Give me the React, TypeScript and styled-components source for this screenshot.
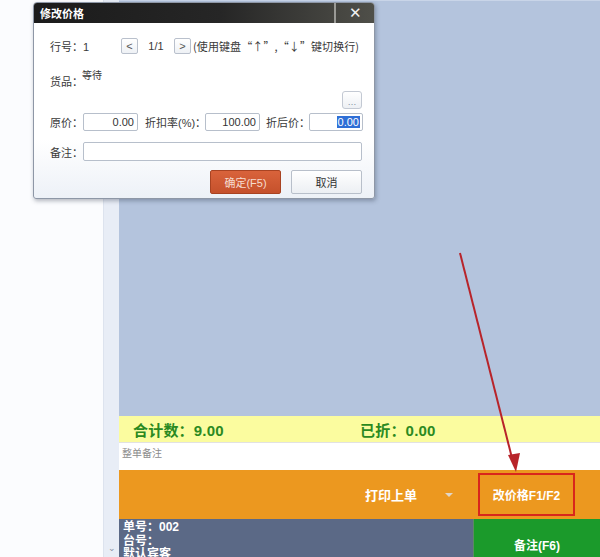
import React from "react";
import styled, { createGlobalStyle } from "styled-components";

const Global = createGlobalStyle`
  html, body { margin: 0; padding: 0; background: #ffffff; }
  body { font-family: "Liberation Sans", "Noto Sans CJK SC", sans-serif; }
  * { box-sizing: border-box; }
`;

const FONT = `"Liberation Sans", "Noto Sans CJK SC", sans-serif`;

const Page = styled.div`
  position: relative;
  width: 600px;
  height: 557px;
  overflow: hidden;
  display: grid;
  grid-template-columns: 103px 16px 1fr;
  font-family: ${FONT};
`;

const LeftPane = styled.div`
  background: #fbfcfe;
`;

const ScrollStrip = styled.div`
  background: #e8edf6;
  border-left: 1px solid #dde3ee;
  display: flex;
  flex-direction: column;
  justify-content: flex-end;
  align-items: center;
  padding-bottom: 4px;
  color: #8a93a3;
  font-size: 9px;
`;

const Main = styled.div`
  display: flex;
  flex-direction: column;
  min-width: 0;
`;

const BlueArea = styled.div`
  flex: 1;
  background: #b4c4dd;
  border-top: 1px solid #c9d5e8;
`;

const SummaryBar = styled.div`
  height: 26px;
  background: #fbfc9f;
  display: flex;
  align-items: center;
  padding-left: 14px;
`;

const SummaryItem = styled.span<{ $w?: number }>`
  width: ${(p) => (p.$w ? `${p.$w}px` : "auto")};
  color: #2b8a1f;
  font-weight: bold;
  font-size: 15px;
  letter-spacing: 0.2px;
`;

const NoteRow = styled.div`
  height: 28px;
  background: #ffffff;
  border-top: 1px solid #e2e2e2;
  padding: 2px 3px;
  font-size: 10px;
  color: #8c8c8c;
`;

const ActionBar = styled.div`
  height: 49px;
  background: #ec981f;
  display: flex;
  align-items: center;
`;

const ActionLabel = styled.span`
  margin-left: 246px;
  color: #ffffff;
  font-weight: bold;
  font-size: 13px;
`;

const Caret = styled.span`
  margin-left: 28px;
  width: 0;
  height: 0;
  border-left: 4px solid transparent;
  border-right: 4px solid transparent;
  border-top: 4px solid #e0d6c8;
`;

const HighlightBox = styled.div`
  margin-left: 25px;
  width: 97px;
  height: 43px;
  border: 2px solid #d9261c;
  display: flex;
  align-items: center;
  justify-content: center;
  color: #ffffff;
  font-weight: bold;
  font-size: 12px;
`;

const InfoBar = styled.div`
  height: 38px;
  display: grid;
  grid-template-columns: 354px 1fr;
  overflow: hidden;
`;

const OrderInfo = styled.div`
  background: #5b6986;
  color: #ffffff;
  font-weight: bold;
  font-size: 12px;
  line-height: 13.5px;
  padding: 2px 0 0 4px;
`;

const NoteButton = styled.div`
  background: #1b9a2b;
  border-left: 1px solid #5b8a62;
  color: #ffffff;
  font-weight: bold;
  font-size: 12px;
  display: flex;
  align-items: flex-end;
  justify-content: center;
  padding-bottom: 9px;
`;

/* Dialog */
const Dialog = styled.div`
  position: absolute;
  left: 33px;
  top: 2px;
  width: 342px;
  height: 197px;
  border: 1px solid #8e97a6;
  border-radius: 4px 4px 3px 3px;
  box-shadow: 1px 2px 4px rgba(40, 50, 70, 0.35);
  background: linear-gradient(180deg, #ffffff 0%, #ffffff 70%, #edf1f7 100%);
  overflow: hidden;
  font-size: 11px;
  color: #3a3a3a;
`;

const TitleBar = styled.div`
  height: 20px;
  background: linear-gradient(90deg, #1b1b1b 0%, #262626 55%, #4f4f49 100%);
  display: flex;
  align-items: center;
  color: #ffffff;
`;

const Title = styled.span`
  flex: 1;
  padding-left: 6px;
  font-weight: bold;
  font-size: 11px;
`;

const CloseBtn = styled.span`
  width: 40px;
  height: 100%;
  border-left: 2px solid #9a9a96;
  display: flex;
  align-items: center;
  justify-content: center;
  font-size: 15px;
  color: #f0f0f0;
`;

const Body = styled.div`
  padding: 0 12px 0 16px;
  display: flex;
  flex-direction: column;
`;

const Row = styled.div<{ $mt: number; $h: number; $align?: string; $justify?: string }>`
  margin-top: ${(p) => p.$mt}px;
  height: ${(p) => p.$h}px;
  display: flex;
  align-items: ${(p) => p.$align || "center"};
  justify-content: ${(p) => p.$justify || "flex-start"};
  white-space: nowrap;
`;

const Label = styled.span<{ $w?: number; $pl?: number; $center?: boolean }>`
  width: ${(p) => (p.$w ? `${p.$w}px` : "auto")};
  padding-left: ${(p) => p.$pl || 0}px;
  text-align: ${(p) => (p.$center ? "center" : "left")};
  flex-shrink: 0;
`;

const NavBtn = styled.span`
  width: 17px;
  height: 16px;
  border: 1px solid #b9c0cc;
  border-radius: 2px;
  background: linear-gradient(180deg, #ffffff, #eef1f5);
  display: flex;
  align-items: center;
  justify-content: center;
  font-size: 11px;
  color: #555;
`;

const Hint = styled.span`
  margin-left: 2px;
  font-family: "Noto Sans CJK SC", sans-serif;
  font-size: 11px;
  letter-spacing: 0.1px;
`;

const Goods = styled.span`
  align-self: flex-start;
  margin-top: 2px;
  font-size: 10px;
`;

const DotsBtn = styled.span`
  width: 20px;
  height: 18px;
  border: 1px solid #c3c9d3;
  border-radius: 3px;
  background: linear-gradient(180deg, #ffffff, #edf0f4);
  display: flex;
  align-items: flex-end;
  justify-content: center;
  font-size: 9px;
  color: #7d8aa0;
  line-height: 12px;
`;

const Field = styled.span<{ $w?: number; $h: number; $grow?: boolean }>`
  width: ${(p) => (p.$w ? `${p.$w}px` : "auto")};
  flex: ${(p) => (p.$grow ? 1 : "none")};
  height: ${(p) => p.$h}px;
  border: 1px solid #b7bfcb;
  border-radius: 2px;
  background: #ffffff;
  display: flex;
  align-items: center;
  justify-content: flex-end;
  padding-right: 3px;
  font-size: 11px;
  color: #333;
  overflow: hidden;
`;

const Selected = styled.span`
  background: #2f6fd6;
  color: #ffffff;
  padding: 0 1px;
  margin-right: -1px;
`;

const ButtonRow = styled.div`
  margin-top: 9px;
  height: 24px;
  display: flex;
  justify-content: flex-end;
  gap: 10px;
`;

const DlgButton = styled.span<{ $primary?: boolean }>`
  width: 71px;
  height: 24px;
  border-radius: 2px;
  border: 1px solid ${(p) => (p.$primary ? "#a84322" : "#b8bfca")};
  background: ${(p) =>
    p.$primary
      ? "linear-gradient(180deg, #d9633b 0%, #c5512c 100%)"
      : "linear-gradient(180deg, #ffffff 0%, #eceff3 100%)"};
  color: ${(p) => (p.$primary ? "#f6dcd0" : "#333")};
  display: flex;
  align-items: center;
  justify-content: center;
  font-size: 11px;
`;

const ArrowSvg = styled.svg`
  position: absolute;
  left: 0;
  top: 0;
  pointer-events: none;
`;

export default function App() {
  return (
    <>
      <Global />
      <Page>
        <LeftPane />
        <ScrollStrip>⌄</ScrollStrip>
        <Main>
          <BlueArea />
          <SummaryBar>
            <SummaryItem $w={227}>合计数：9.00</SummaryItem>
            <SummaryItem>已折：0.00</SummaryItem>
          </SummaryBar>
          <NoteRow>整单备注</NoteRow>
          <ActionBar>
            <ActionLabel>打印上单</ActionLabel>
            <Caret />
            <HighlightBox>改价格F1/F2</HighlightBox>
          </ActionBar>
          <InfoBar>
            <OrderInfo>
              单号：002
              <br />
              台号：
              <br />
              默认宾客
            </OrderInfo>
            <NoteButton>备注(F6)</NoteButton>
          </InfoBar>
        </Main>

        <Dialog>
          <TitleBar>
            <Title>修改价格</Title>
            <CloseBtn>✕</CloseBtn>
          </TitleBar>
          <Body>
            <Row $mt={15} $h={16}>
              <Label $w={71}>行号：1</Label>
              <NavBtn>&lt;</NavBtn>
              <Label $w={36} $center>1/1</Label>
              <NavBtn>&gt;</NavBtn>
              <Hint>(使用键盘“↑”,“↓”键切换行)</Hint>
            </Row>
            <Row $mt={11} $h={24} $align="flex-end">
              <Label $w={32}>货品：</Label>
              <Goods>等待</Goods>
            </Row>
            <Row $mt={2} $h={18} $justify="flex-end">
              <DotsBtn>…</DotsBtn>
            </Row>
            <Row $mt={4} $h={18}>
              <Label $w={33}>原价：</Label>
              <Field $w={55} $h={18}>0.00</Field>
              <Label $w={67} $pl={7}>折扣率(%)：</Label>
              <Field $w={55} $h={18}>100.00</Field>
              <Label $w={49} $pl={6}>折后价：</Label>
              <Field $w={54} $h={18}>
                <Selected>0.00</Selected>
              </Field>
            </Row>
            <Row $mt={11} $h={19}>
              <Label $w={33}>备注：</Label>
              <Field $grow $h={19} />
            </Row>
            <ButtonRow>
              <DlgButton $primary>确定(F5)</DlgButton>
              <DlgButton>取消</DlgButton>
            </ButtonRow>
          </Body>
        </Dialog>

        <ArrowSvg width="600" height="557" viewBox="0 0 600 557">
          <line x1="460" y1="253" x2="512" y2="458" stroke="#b8242a" strokeWidth="2" />
          <path d="M516,472 L508,455 L520,453 Z" fill="#b8242a" />
        </ArrowSvg>
      </Page>
    </>
  );
}
